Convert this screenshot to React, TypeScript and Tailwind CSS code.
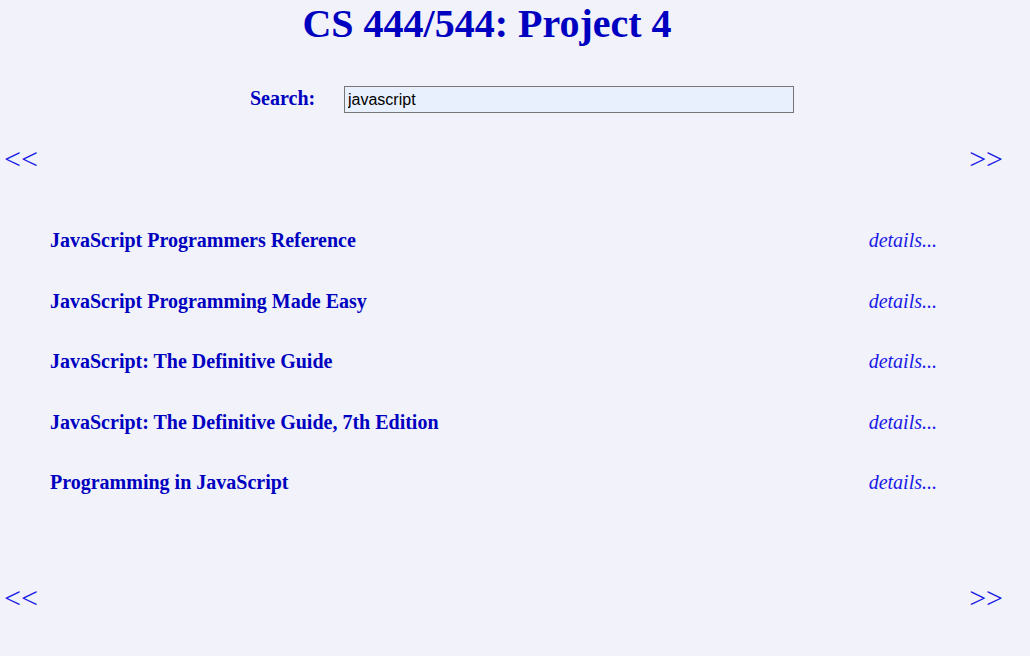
import React from "react";

const books = [
  "JavaScript Programmers Reference",
  "JavaScript Programming Made Easy",
  "JavaScript: The Definitive Guide",
  "JavaScript: The Definitive Guide, 7th Edition",
  "Programming in JavaScript",
];

function Nav() {
  return (
    <div className="flex justify-between pl-[4px] pr-[27px] text-[30px] leading-[30px] text-[#1a1ae6]">
      <span>&lt;&lt;</span>
      <span>&gt;&gt;</span>
    </div>
  );
}

export default function App() {
  return (
    <div
      className="min-h-[656px] w-[1030px] bg-[#f1f2fa] text-[#0000c0]"
      style={{ fontFamily: '"Liberation Serif", serif' }}
    >
      <h1 className="flex justify-center pt-[1px] pr-[56px] text-[40px] font-bold leading-[46px]">
        CS 444/544: Project 4
      </h1>
      <div className="mt-[39px] flex items-center">
        <label className="ml-[250px] -mt-[4px] w-[94px] text-[20px] font-bold leading-[24px]">Search:</label>
        <input
          defaultValue="javascript"
          className="h-[27px] w-[450px] border border-[#767676] bg-[#e8f0fe] px-[3px] text-[16px] text-black outline-none"
          style={{ fontFamily: '"Liberation Sans", Arial, sans-serif' }}
        />
      </div>
      <div className="mt-[31px]">
        <Nav />
      </div>
      <div className="mt-[54px] flex flex-col gap-[36.5px] pl-[50px] pr-[93px]">
        {books.map((b) => (
          <div key={b} className="flex justify-between text-[20px] leading-[24px]">
            <span className="font-bold">{b}</span>
            <span className="italic text-[#1a1ae6]">details...</span>
          </div>
        ))}
      </div>
      <div className="mt-[89px]">
        <Nav />
      </div>
    </div>
  );
}
